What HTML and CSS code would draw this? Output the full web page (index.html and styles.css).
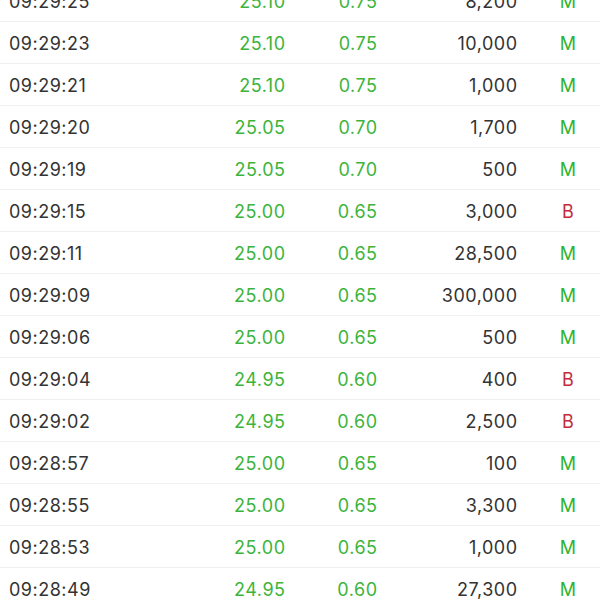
FILE: index.html
```html
<!DOCTYPE html>
<html>
<head>
<meta charset="utf-8">
<link rel="stylesheet" href="styles.css">
</head>
<body>
<div class="list">
  <div class="row"><span class="time">09:29:25</span><span class="price up">25.10</span><span class="chg up">0.75</span><span class="vol">8,200</span><span class="flag m">M</span></div>
  <div class="row"><span class="time">09:29:23</span><span class="price up">25.10</span><span class="chg up">0.75</span><span class="vol">10,000</span><span class="flag m">M</span></div>
  <div class="row"><span class="time">09:29:21</span><span class="price up">25.10</span><span class="chg up">0.75</span><span class="vol">1,000</span><span class="flag m">M</span></div>
  <div class="row"><span class="time">09:29:20</span><span class="price up">25.05</span><span class="chg up">0.70</span><span class="vol">1,700</span><span class="flag m">M</span></div>
  <div class="row"><span class="time">09:29:19</span><span class="price up">25.05</span><span class="chg up">0.70</span><span class="vol">500</span><span class="flag m">M</span></div>
  <div class="row"><span class="time">09:29:15</span><span class="price up">25.00</span><span class="chg up">0.65</span><span class="vol">3,000</span><span class="flag b">B</span></div>
  <div class="row"><span class="time">09:29:11</span><span class="price up">25.00</span><span class="chg up">0.65</span><span class="vol">28,500</span><span class="flag m">M</span></div>
  <div class="row"><span class="time">09:29:09</span><span class="price up">25.00</span><span class="chg up">0.65</span><span class="vol">300,000</span><span class="flag m">M</span></div>
  <div class="row"><span class="time">09:29:06</span><span class="price up">25.00</span><span class="chg up">0.65</span><span class="vol">500</span><span class="flag m">M</span></div>
  <div class="row"><span class="time">09:29:04</span><span class="price up">24.95</span><span class="chg up">0.60</span><span class="vol">400</span><span class="flag b">B</span></div>
  <div class="row"><span class="time">09:29:02</span><span class="price up">24.95</span><span class="chg up">0.60</span><span class="vol">2,500</span><span class="flag b">B</span></div>
  <div class="row"><span class="time">09:28:57</span><span class="price up">25.00</span><span class="chg up">0.65</span><span class="vol">100</span><span class="flag m">M</span></div>
  <div class="row"><span class="time">09:28:55</span><span class="price up">25.00</span><span class="chg up">0.65</span><span class="vol">3,300</span><span class="flag m">M</span></div>
  <div class="row"><span class="time">09:28:53</span><span class="price up">25.00</span><span class="chg up">0.65</span><span class="vol">1,000</span><span class="flag m">M</span></div>
  <div class="row"><span class="time">09:28:49</span><span class="price up">24.95</span><span class="chg up">0.60</span><span class="vol">27,300</span><span class="flag m">M</span></div>
</div>
</body>
</html>
```
FILE: styles.css
```css
html, body {
  margin: 0;
  padding: 0;
  background: #ffffff;
  overflow: hidden;
}
body {
  font-family: Inter, "Noto Sans", sans-serif;
  font-size: 18px;
  letter-spacing: 0.5px;
  color: #333333;
}
.list {
  margin-top: -20px;
}
.row {
  display: grid;
  grid-template-columns: 200px 76px 92px 140px 83px;
  align-items: center;
  height: 39px;
  padding-top: 2px;
  padding-left: 9px;
  border-bottom: 1px solid #f0f0f0;
}
.time { text-align: left; }
.price, .chg, .vol { text-align: right; }
.price, .chg, .vol { margin-right: -0.5px; }
.flag {
  text-align: center;
  padding-left: 19px;
  letter-spacing: 0;
}
.up { color: #3cb43c; }
.m { color: #2eb32e; }
.b { color: #c42a3a; }
```
